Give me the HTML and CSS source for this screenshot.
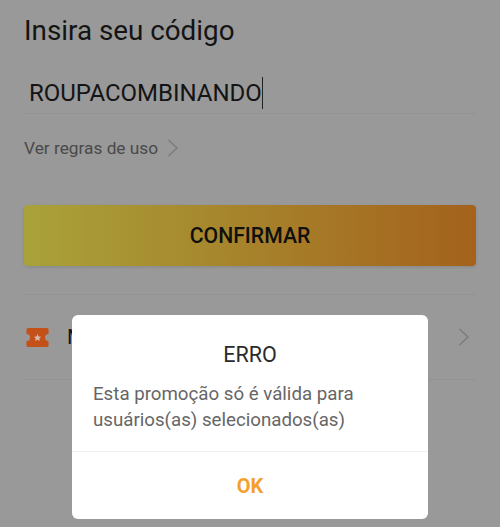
FILE: index.html
```html
<!DOCTYPE html>
<html>
<head>
    <title>Insira seu código</title>
    <meta charset="utf-8">
    <meta name="viewport" content="width=device-width, initial-scale=1">
    <link rel="stylesheet" href="styles.css">
</head>
<body>
    <div class="container">
        <h1>Insira seu código</h1>

        <div class="code-field">
            <span class="code-value">ROUPACOMBINANDO</span><span class="caret"></span>
        </div>

        <div class="rules">
            <span>Ver regras de uso</span>
            <svg class="chevron" width="12" height="20" viewBox="0 0 12 20"><path d="M1.5 2l8.5 8-8.5 8"/></svg>
        </div>

        <div class="confirm">CONFIRMAR</div>

        <div class="coupons">
            <svg class="ticket" width="23" height="19" viewBox="0 0 23 19">
                <path d="M2 0h19a1.500 1.500 0 0 1 1.500 1.500V6a3.500 3.500 0 0 0 0 7v4.500A1.500 1.500 0 0 1 21 19H2a1.500 1.500 0 0 1-1.500-1.500V13a3.500 3.500 0 0 0 0-7V1.500A1.500 1.500 0 0 1 2 0z" fill="#c4501a"/>
                <path d="M11.500 6l1.100 2.400 2.600.3-1.900 1.700.5 2.600-2.300-1.300-2.300 1.300.5-2.600-1.900-1.700 2.600-.3z" fill="#d8b9a6"/>
            </svg>
            <span class="coupons-label">Meus códigos</span>
            <svg class="chevron" width="12" height="20" viewBox="0 0 12 20"><path d="M1.5 2l8.500 8-8.500 8"/></svg>
        </div>
    </div>

    <div class="dialog">
        <div class="dialog-title">ERRO</div>
        <div class="dialog-text">Esta promoção só é válida para usuários(as) selecionados(as)</div>
        <div class="dialog-action">OK</div>
    </div>
</body>
</html>
```

FILE: styles.css
```css
html, body {
    height: 100%;
}
body {
    font-family: Roboto, sans-serif;
    margin: 0;
    background: #999999;
    overflow: hidden;
}
.container {
    padding: 0 24px;
}
h1 {
    margin: 0;
    padding-top: 14px;
    font-size: 27.8px;
    line-height: 34px;
    font-weight: 400;
    color: #141414;
}
.code-field {
    display: flex;
    align-items: center;
    height: 40px;
    padding-top: 25px;
    padding-left: 5px;
    border-bottom: 1px solid #939393;
}
.code-value {
    font-size: 24px;
    color: #141414;
}
.caret {
    width: 1px;
    height: 32px;
    background: #222;
}
.rules {
    display: flex;
    align-items: center;
    gap: 9px;
    height: 68px;
    font-size: 17.3px;
    color: #4a4a4a;
}
.chevron {
    fill: none;
    stroke: #7c7c7c;
    stroke-width: 1.5;
}
.confirm {
    display: flex;
    align-items: center;
    justify-content: center;
    height: 61px;
    margin-top: 23px;
    border-radius: 4px;
    background: linear-gradient(90deg, #a9a23a, #a4621c);
    box-shadow: 0 1px 3px rgba(0,0,0,0.12);
    font-size: 21.2px;
    font-weight: 500;
    color: #101010;
}
.coupons {
    display: flex;
    align-items: center;
    height: 84px;
    margin-top: 28px;
    padding: 0 6px 0 2px;
    border-top: 1px solid #939393;
    border-bottom: 1px solid #939393;
}
.ticket {
    margin-right: 18px;
}
.coupons-label {
    flex: 1;
    font-size: 21px;
    color: #141414;
}
.dialog {
    position: absolute;
    left: 72px;
    top: 315px;
    width: 356px;
    height: 204px;
    border-radius: 6px;
    background: white;
}
.dialog-title {
    margin-top: 27px;
    text-align: center;
    font-size: 21.5px;
    line-height: 26px;
    color: #2b2b2b;
}
.dialog-text {
    padding: 0 21px;
    margin-top: 13px;
    font-size: 18.7px;
    line-height: 26px;
    color: #666;
}
.dialog-action {
    margin-top: 18px;
    border-top: 1px solid #f1f1f1;
    text-align: center;
    line-height: 68px;
    font-size: 20px;
    font-weight: 700;
    color: #f5a02c;
}
```
